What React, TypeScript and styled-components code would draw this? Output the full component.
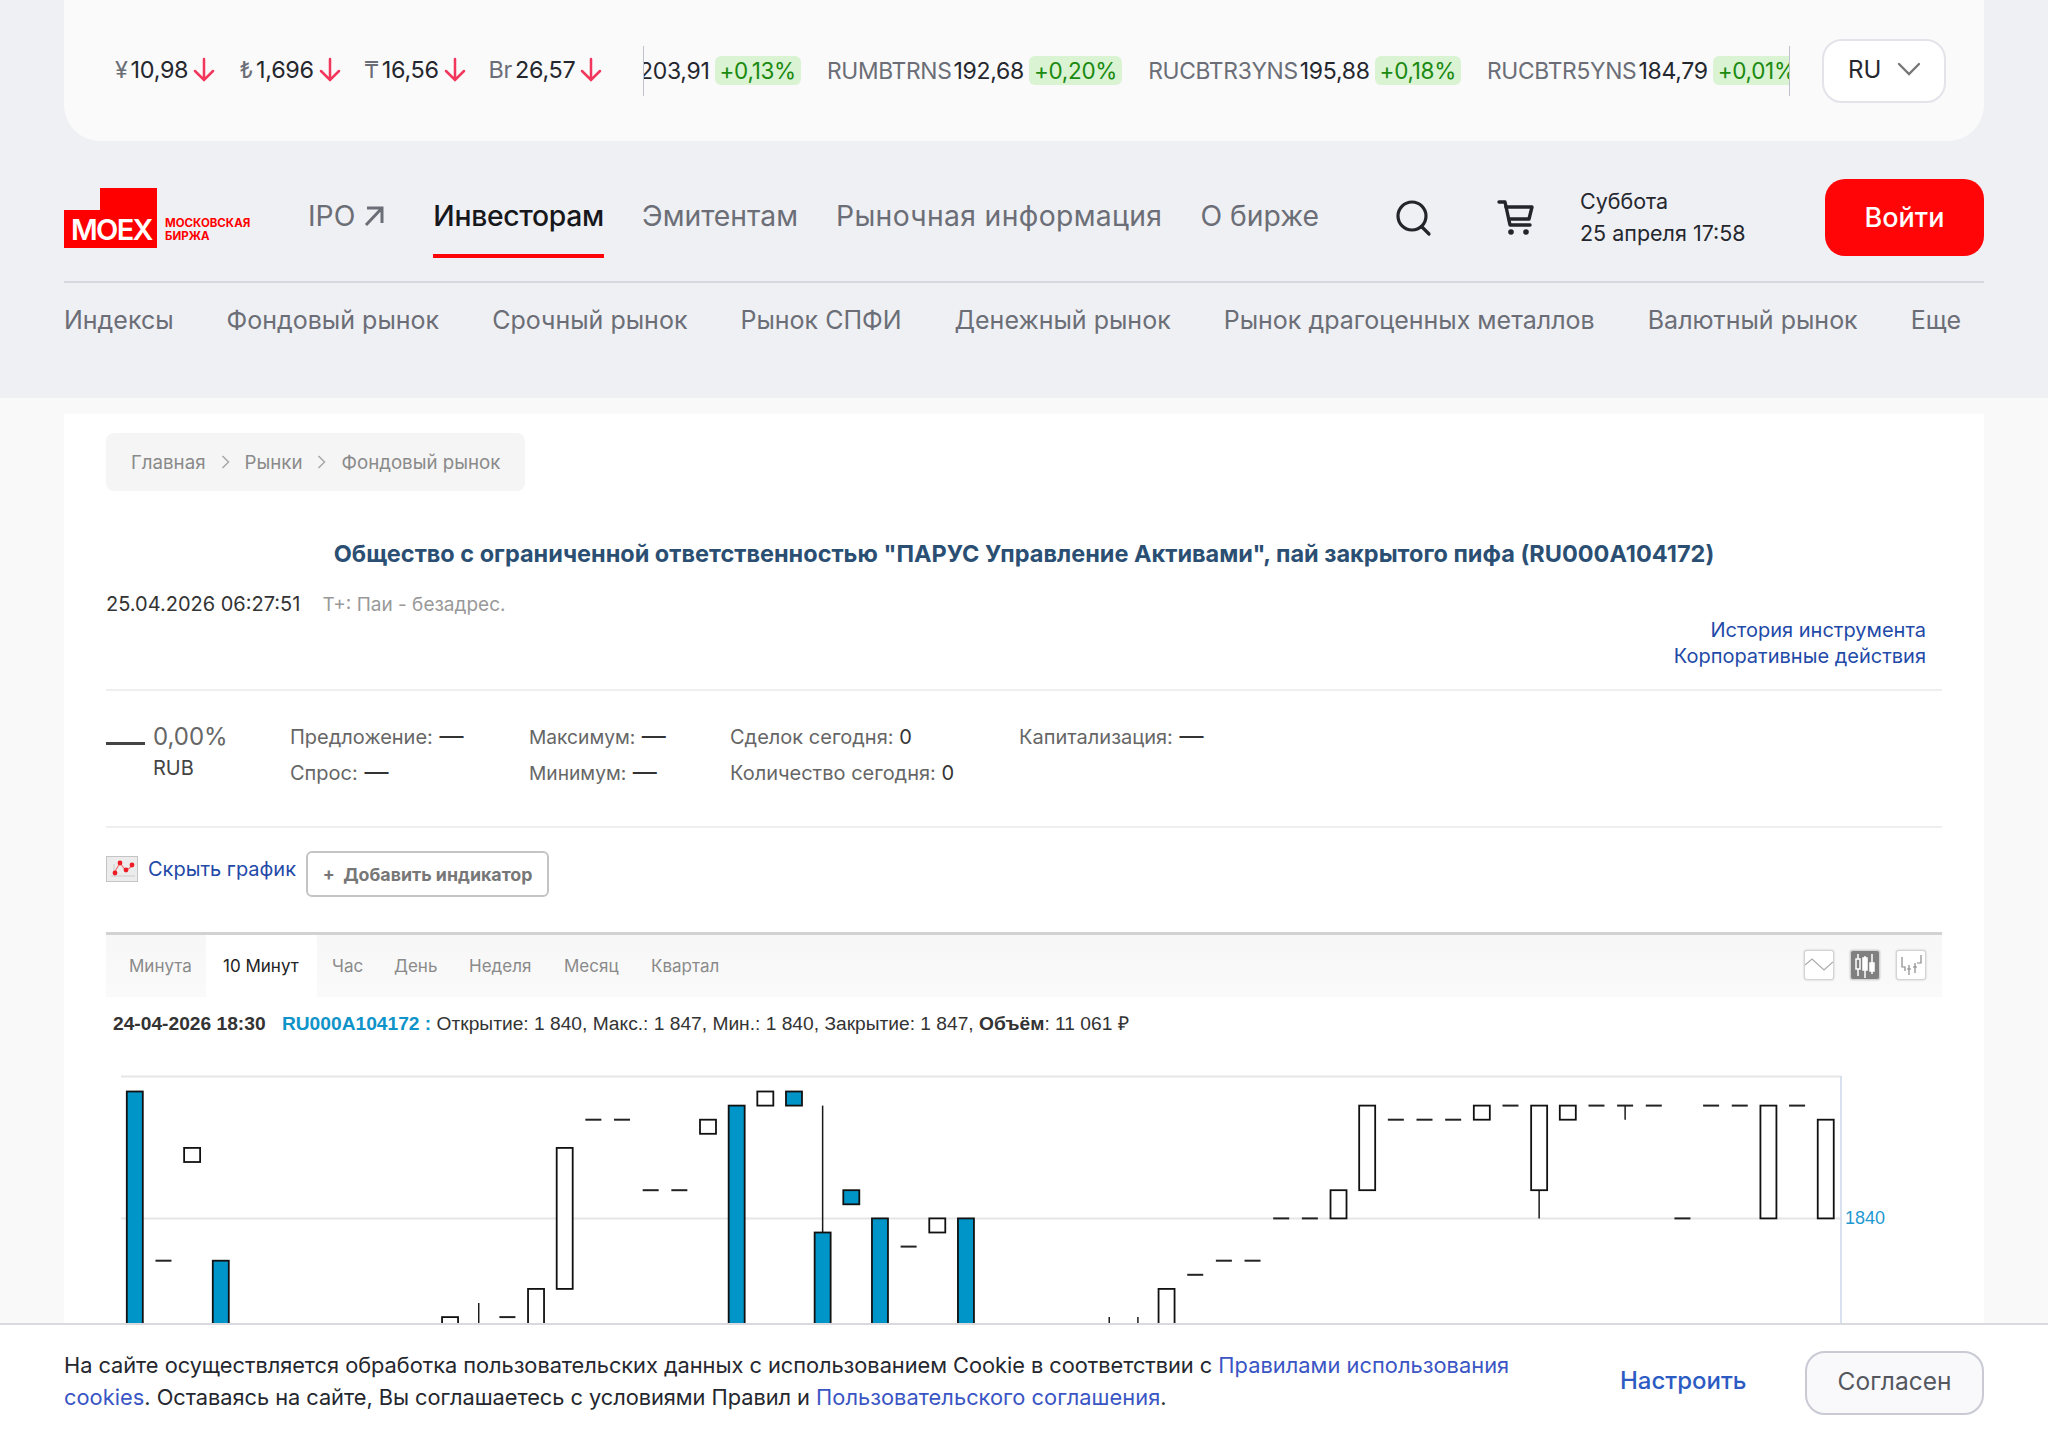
import React from "react";
import styled, { createGlobalStyle } from "styled-components";

const Global = createGlobalStyle`
  html, body { margin: 0; padding: 0; background: #f9f9f9; overflow: hidden; }
  body { font-family: Inter, "Noto Sans", sans-serif; }
  * { box-sizing: border-box; }
  a { text-decoration: none; color: inherit; }
`;

const Page = styled.div`
  width: 2048px;
  height: 1440px;
  overflow: hidden;
  background: #f9f9f9;
`;
const Header = styled.header`
  height: 398px;
  background: #eff0f4;
  padding: 0 64px;
`;
const TopBar = styled.div`
  height: 141px;
  background: #fafafa;
  border-radius: 0 0 36px 36px;
  display: flex;
  align-items: center;
  padding-left: 51px;
`;
const Currencies = styled.div`
  display: flex;
  width: 528px;
  flex: none;
`;
const Currency = styled.div`
  display: flex;
  align-items: center;
  width: 124.5px;
  flex: none;
  font-size: 23.4px;
  letter-spacing: -0.3px;
  color: #25272e;
  margin-top: -2px;
`;
const CurSym = styled.span`
  color: #6b6e76;
  margin-right: 3px;
`;
const Ticker = styled.div`
  width: 1147px;
  height: 50px;
  flex: none;
  overflow: hidden;
  border-left: 1.5px solid #bfc2cc;
  border-right: 1.5px solid #bfc2cc;
  display: flex;
  align-items: center;
  white-space: nowrap;
  font-size: 23px;
  letter-spacing: -0.3px;
`;
const TickItem = styled.div<{ $offset?: number }>`
  display: flex;
  align-items: center;
  flex: none;
  margin-left: ${(p) => p.$offset ?? 26}px;
`;
const TickName = styled.span`
  color: #6b6e76;
  font-size: 22.8px;
  margin-right: 2px;
`;
const TickValue = styled.span`
  color: #25272e;
`;
const TickBadge = styled.span`
  background: #daf3d3;
  color: #1b8a10;
  font-size: 22.5px;
  border-radius: 6px;
  height: 29px;
  line-height: 29px;
  padding: 0 5px;
  margin-left: 5px;
`;
const LangButton = styled.div`
  width: 124px;
  height: 64px;
  margin-left: 32px;
  flex: none;
  background: #fff;
  border: 2px solid #e3e4ea;
  border-radius: 20px;
  display: flex;
  align-items: center;
  padding: 0 0 3px 24px;
  gap: 16px;
  font-size: 24px;
  color: #25272e;
`;
const NavRow = styled.div`
  height: 142px;
  padding-top: 14px;
  display: flex;
  align-items: center;
  border-bottom: 2px solid #d5d6df;
`;
const LogoWrap = styled.div`
  width: 244px;
  flex: none;
  display: flex;
`;
const NavList = styled.nav`
  display: flex;
  align-items: center;
  height: 100%;
`;
const NavItem = styled.a<{ $active?: boolean; $gap?: number; $ls?: number }>`
  display: flex;
  align-items: center;
  gap: 8px;
  height: 79px;
  margin-right: ${(p) => p.$gap ?? 38}px;
  font-size: 28.3px;
  color: ${(p) => (p.$active ? "#17181c" : "#6b6e76")};
  font-weight: ${(p) => (p.$active ? 500 : 400)};
  letter-spacing: ${(p) => (p.$active ? -0.3 : p.$ls ?? 0)}px;
  border-bottom: 4px solid ${(p) => (p.$active ? "#ff0508" : "transparent")};
  white-space: nowrap;
`;
const NavIcon = styled.svg`
  flex: none;
  color: #23252b;
`;
const SearchSlot = styled.div`
  margin-left: 38px;
  width: 102px;
  flex: none;
  display: flex;
`;
const CartSlot = styled.div`
  width: 83px;
  flex: none;
  display: flex;
`;
const DateBox = styled.div`
  flex: 1;
  font-size: 21.5px;
  line-height: 32px;
  color: #25272e;
  margin-top: -2px;
`;
const LoginButton = styled.a`
  width: 159px;
  height: 77px;
  margin-top: -2px;
  border-radius: 20px;
  background: #ff0508;
  color: #fff;
  font-size: 27px;
  font-weight: 500;
  display: flex;
  align-items: center;
  justify-content: center;
`;
const SubNav = styled.nav`
  display: flex;
  gap: 53px;
  padding-top: 22px;
  font-size: 25px;
  color: #6b6e76;
  white-space: nowrap;
`;

const Main = styled.main`
  width: 1920px;
  height: 1026px;
  margin: 16px auto 0;
  background: #fff;
  padding: 19px 42px 0;
`;
const Breadcrumbs = styled.div`
  display: inline-flex;
  align-items: center;
  height: 58px;
  padding: 0 25px;
  gap: 15px;
  background: #f5f5f5;
  border-radius: 8px;
  font-size: 18.7px;
  color: #8a8a8a;
`;
const Title = styled.h1`
  margin: 45px 0 0;
  font-size: 23.5px;
  line-height: 36px;
  font-weight: 700;
  text-align: center;
  color: #2b4f73;
`;
const MetaRow = styled.div`
  display: flex;
  align-items: baseline;
  gap: 22px;
  margin-top: 17px;
  font-size: 20px;
  line-height: 30px;
  color: #333;
`;
const MetaNote = styled.span`
  font-size: 19px;
  color: #999;
`;
const SideLinks = styled.div`
  height: 72px;
  padding: 0 16px 0 0;
  text-align: right;
  font-size: 20px;
  line-height: 26px;
  color: #1f4aa8;
  margin-top: -3px;
`;
const Divider = styled.div`
  height: 2px;
  background: #efefef;
`;
const Stats = styled.div`
  display: flex;
  height: 135px;
  padding-top: 28px;
`;
const PriceBlock = styled.div`
  width: 184px;
  flex: none;
  display: flex;
  gap: 8px;
`;
const PriceDash = styled.div`
  width: 39px;
  height: 3px;
  background: #444;
  margin-top: 23px;
`;
const PriceText = styled.div`
  font-size: 24px;
  line-height: 36px;
  color: #666;
`;
const PriceCur = styled.div`
  font-size: 20px;
  line-height: 26px;
  color: #444;
`;
const StatColumn = styled.div<{ $w: number; $fs?: number }>`
  width: ${(p) => p.$w}px;
  flex: none;
  font-size: ${(p) => p.$fs ?? 20}px;
  line-height: 36px;
  color: #666;
`;
const StatValue = styled.span`
  color: #333;
`;
const StatDash = styled.span`
  color: #333;
  font-size: 24px;
  line-height: 1;
  margin-left: 1px;
`;
const ChartControls = styled.div`
  display: flex;
  align-items: flex-start;
  height: 104px;
  padding-top: 23px;
`;
const HideLink = styled.a`
  display: flex;
  align-items: center;
  gap: 10px;
  font-size: 20px;
  color: #1f4aa8;
  height: 32px;
  margin-top: 2px;
`;
const AddButton = styled.button`
  margin-left: 10px;
  width: 243px;
  height: 46px;
  background: #fff;
  border: 2px solid #c4c4c4;
  border-radius: 6px;
  font-family: Inter, sans-serif;
  font-size: 17.8px;
  font-weight: 700;
  color: #777;
  padding: 0;
`;
const ChartToolbar = styled.div`
  display: flex;
  height: 65px;
  border-top: 3px solid #d2d2d2;
  background: linear-gradient(#f7f7f7, #fafafa);
  align-items: stretch;
`;
const Tab = styled.div<{ $active?: boolean; $w: number; $pl: number }>`
  width: ${(p) => p.$w}px;
  padding-left: ${(p) => p.$pl}px;
  flex: none;
  display: flex;
  align-items: center;
  font-size: 17px;
  white-space: nowrap;
  background: ${(p) => (p.$active ? "#fff" : "transparent")};
  color: ${(p) => (p.$active ? "#222" : "#8a8a8a")};
`;
const ChartTypes = styled.div`
  margin-left: auto;
  display: flex;
  align-items: center;
  gap: 16px;
  padding-right: 16px;
  padding-bottom: 2px;
`;
const TypeButton = styled.div<{ $active?: boolean }>`
  width: 30px;
  height: 30px;
  border-radius: 3px;
  border: 1px solid #d4d4d4;
  box-shadow: 0 0 2px rgba(0, 0, 0, 0.25);
  background: ${(p) => (p.$active ? "#808080" : "#fff")};
  display: flex;
`;
const InfoLine = styled.div`
  padding-left: 7px;
  margin-top: 15px;
  font-family: "Liberation Sans", Arial, sans-serif;
  font-size: 19.2px;
  line-height: 24px;
  color: #333;
`;
const InfoDate = styled.b`
  margin-right: 11px;
`;
const InfoCode = styled.b`
  color: #0f94c9;
`;
const ChartSvg = styled.svg`
  display: block;
  margin-top: 24px;
`;

const CookieBar = styled.div`
  position: fixed;
  left: 0;
  right: 0;
  bottom: 0;
  height: 117px;
  background: #fff;
  border-top: 2px solid #d9d9de;
  display: flex;
  align-items: center;
  padding: 0 64px;
`;
const CookieText = styled.p`
  margin: -4px 0 0;
  width: 1480px;
  flex: none;
  font-size: 21.8px;
  line-height: 32px;
  letter-spacing: -0.04px;
  color: #25272e;
`;
const CookieLink = styled.a`
  color: #3a55c4;
  letter-spacing: 0.04px;
`;
const Setup = styled.a`
  margin: -4px 0 0 76px;
  font-size: 24px;
  font-weight: 500;
  color: #2c5bc4;
  white-space: nowrap;
`;
const AgreeButton = styled.button`
  margin-left: auto;
  width: 179px;
  height: 64px;
  border: 2px solid #c9cad4;
  border-radius: 20px;
  background: #f9f9fb;
  font-family: Inter, sans-serif;
  font-size: 24.5px;
  color: #55575f;
  padding: 0 0 3px;
`;

const DownArrow = () => (
  <svg width="22" height="26" viewBox="0 0 22 26" fill="none" stroke="#f2365c" strokeWidth="2.5" strokeLinecap="round" style={{ marginLeft: 5, flex: "none" }}>
    <path d="M11 2v21M2 14l9 9 9-9" />
  </svg>
);

const MoexLogo = () => (
  <svg width="187" height="60" viewBox="0 0 187 60" style={{ flex: "none" }}>
    <path d="M36 0h57v60H0V22h36z" fill="#ff0000" />
    <text x="7" y="51.5" fontFamily="Inter, sans-serif" fontSize="29" fontWeight="600" letterSpacing="-1.7" fill="#fff">MOEX</text>
    <text x="101" y="39" fontFamily="Inter, sans-serif" fontSize="11.5" fontWeight="700" fill="#ff0000">МОСКОВСКАЯ</text>
    <text x="101" y="52" fontFamily="Inter, sans-serif" fontSize="11.5" fontWeight="700" fill="#ff0000">БИРЖА</text>
  </svg>
);

type Candle = [number, "f" | "h" | "d", number, number?, number?, number?];
const L = (n: number) => 1091.5 + 14.1 * n;
const BOT = 1450;
const candles: Candle[] = [
  [0, "f", 0, 99],
  [1, "d", 12],
  [2, "h", 4, 5],
  [3, "f", 12, 99],
  [11, "h", 16, 99],
  [12, "d", -1, undefined, 15, 99],
  [13, "d", 16],
  [14, "h", 14, 99],
  [15, "h", 4, 14],
  [16, "d", 2],
  [17, "d", 2],
  [18, "d", 7],
  [19, "d", 7],
  [20, "h", 2, 3],
  [21, "f", 1, 99],
  [22, "h", 0, 1],
  [23, "f", 0, 1],
  [24, "f", 10, 99, 1, 10],
  [25, "f", 7, 8],
  [26, "f", 9, 99],
  [27, "d", 11],
  [28, "h", 9, 10],
  [29, "f", 9, 99],
  [34, "d", -1, undefined, 16, 99],
  [35, "d", -1, undefined, 16, 99],
  [36, "h", 14, 99],
  [37, "d", 13],
  [38, "d", 12],
  [39, "d", 12],
  [40, "d", 9],
  [41, "d", 9],
  [42, "h", 7, 9],
  [43, "h", 1, 7],
  [44, "d", 2],
  [45, "d", 2],
  [46, "d", 2],
  [47, "h", 1, 2],
  [48, "d", 1],
  [49, "h", 1, 7, 7, 9],
  [50, "h", 1, 2],
  [51, "d", 1],
  [52, "d", 1, undefined, 1, 2],
  [53, "d", 1],
  [54, "d", 9],
  [55, "d", 1],
  [56, "d", 1],
  [57, "h", 1, 9],
  [58, "d", 1],
  [59, "h", 2, 9],
];

const lv = (n: number) => (n >= 99 ? BOT : L(n));

const Chart = () => (
  <ChartSvg width="1820" height="400" viewBox="106 1060 1820 400">
    <line x1="121" y1="1076.5" x2="1841" y2="1076.5" stroke="#e6e6e6" strokeWidth="2" />
    <line x1="121" y1="1218.5" x2="1841" y2="1218.5" stroke="#e6e6e6" strokeWidth="2" />
    <line x1="1841" y1="1076" x2="1841" y2="1460" stroke="#ccd6eb" strokeWidth="1.5" />
    {candles.map(([i, kind, a, b, wa, wb]) => {
      const cx = 134.8 + 28.66 * i;
      return (
        <g key={i}>
          {wa !== undefined && wb !== undefined && (
            <line x1={cx} x2={cx} y1={lv(wa)} y2={lv(wb)} stroke="#1a1a1a" strokeWidth="1.5" />
          )}
          {kind === "d" && a >= 0 && (
            <line x1={cx - 8} x2={cx + 8} y1={lv(a)} y2={lv(a)} stroke="#222" strokeWidth="2" />
          )}
          {kind !== "d" && (
            <rect
              x={cx - 8}
              y={lv(a)}
              width="16"
              height={lv(b as number) - lv(a)}
              fill={kind === "f" ? "#0095c8" : "#fff"}
              stroke="#111"
              strokeWidth="1.8"
            />
          )}
        </g>
      );
    })}
    <text x="1845" y="1224" fontFamily="Liberation Sans, Arial, sans-serif" fontSize="18" fill="#1f9ad1">
      1840
    </text>
  </ChartSvg>
);

const Sep = () => (
  <svg width="9" height="16" viewBox="0 0 9 16" fill="none" stroke="#a8a8a8" strokeWidth="1.5">
    <path d="M1.5 2l6 6-6 6" />
  </svg>
);

const ticks = [
  { value: "203,91", change: "+0,13%", offset: -5 },
  { name: "RUMBTRNS", value: "192,68", change: "+0,20%" },
  { name: "RUCBTR3YNS", value: "195,88", change: "+0,18%" },
  { name: "RUCBTR5YNS", value: "184,79", change: "+0,01%" },
];

export default function App() {
  return (
    <Page>
      <Global />
      <Header>
        <TopBar>
          <Currencies>
            {[
              ["¥", "10,98"],
              ["₺", "1,696"],
              ["₸", "16,56"],
              ["Br", "26,57"],
            ].map(([s, v]) => (
              <Currency key={s}>
                <CurSym>{s}</CurSym>
                {v}
                <DownArrow />
              </Currency>
            ))}
          </Currencies>
          <Ticker>
            {ticks.map((t, i) => (
              <TickItem key={i} $offset={t.offset}>
                {t.name && <TickName>{t.name}</TickName>}
                <TickValue>{t.value}</TickValue>
                <TickBadge>{t.change}</TickBadge>
              </TickItem>
            ))}
          </Ticker>
          <LangButton>
            RU
            <svg width="24" height="14" viewBox="0 0 24 14" fill="none" stroke="#777" strokeWidth="2.4" strokeLinecap="round">
              <path d="M2 2l10 10L22 2" />
            </svg>
          </LangButton>
        </TopBar>
        <NavRow>
          <LogoWrap>
            <MoexLogo />
          </LogoWrap>
          <NavList>
            <NavItem $gap={48}>
              IPO
              <svg width="22" height="22" viewBox="0 0 22 22" fill="none" stroke="#6b6e76" strokeWidth="3">
                <path d="M4 3h15v15M19 3L3 20" />
              </svg>
            </NavItem>
            <NavItem $active>Инвесторам</NavItem>
            <NavItem>Эмитентам</NavItem>
            <NavItem $ls={0.35}>Рыночная информация</NavItem>
            <NavItem>О бирже</NavItem>
          </NavList>
          <SearchSlot>
            <NavIcon width="38" height="38" viewBox="0 0 38 38" fill="none" stroke="currentColor" strokeWidth="3.2" strokeLinecap="round">
              <circle cx="17" cy="17" r="14" />
              <path d="M27 28l7 7" />
            </NavIcon>
          </SearchSlot>
          <CartSlot>
            <NavIcon width="38" height="36" viewBox="0 0 38 36" fill="none" stroke="currentColor" strokeWidth="3.4" strokeLinecap="round" strokeLinejoin="round">
              <path d="M2 2h6l5 23h20" />
              <path d="M9 7h26l-3 12H12" />
              <circle cx="14" cy="32" r="2.8" fill="currentColor" stroke="none" />
              <circle cx="29" cy="32" r="2.8" fill="currentColor" stroke="none" />
            </NavIcon>
          </CartSlot>
          <DateBox>
            Суббота
            <br />
            25 апреля 17:58
          </DateBox>
          <LoginButton>Войти</LoginButton>
        </NavRow>
        <SubNav>
          <a>Индексы</a>
          <a>Фондовый рынок</a>
          <a>Срочный рынок</a>
          <a>Рынок СПФИ</a>
          <a>Денежный рынок</a>
          <a>Рынок драгоценных металлов</a>
          <a>Валютный рынок</a>
          <a>Еще</a>
        </SubNav>
      </Header>
      <Main>
        <Breadcrumbs>
          Главная <Sep /> Рынки <Sep /> Фондовый рынок
        </Breadcrumbs>
        <Title>Общество с ограниченной ответственностью "ПАРУС Управление Активами", пай закрытого пифа (RU000A104172)</Title>
        <MetaRow>
          25.04.2026 06:27:51
          <MetaNote>Т+: Паи - безадрес.</MetaNote>
        </MetaRow>
        <SideLinks>
          История инструмента
          <br />
          Корпоративные действия
        </SideLinks>
        <Divider />
        <Stats>
          <PriceBlock>
            <PriceDash />
            <div>
              <PriceText>0,00%</PriceText>
              <PriceCur>RUB</PriceCur>
            </div>
          </PriceBlock>
          <StatColumn $w={239}>
            Предложение: <StatDash>—</StatDash>
            <br />
            Спрос: <StatDash>—</StatDash>
          </StatColumn>
          <StatColumn $w={201} $fs={19.2}>
            Максимум: <StatDash>—</StatDash>
            <br />
            Минимум: <StatDash>—</StatDash>
          </StatColumn>
          <StatColumn $w={289}>
            Сделок сегодня: <StatValue>0</StatValue>
            <br />
            Количество сегодня: <StatValue>0</StatValue>
          </StatColumn>
          <StatColumn $w={300}>Капитализация: <StatDash>—</StatDash></StatColumn>
        </Stats>
        <Divider />
        <ChartControls>
          <HideLink>
            <svg width="32" height="26" viewBox="0 0 32 26">
              <rect x="0.5" y="0.5" width="31" height="25" fill="#ececec" stroke="#c4c4c4" />
              <path d="M8 8v13M5 20h24" stroke="#d6d6d6" strokeWidth="1.5" fill="none" />
              <path d="M8 17L14 7l6 8 7-6" stroke="#f07070" strokeWidth="1.2" fill="none" />
              <circle cx="9" cy="17" r="2.4" fill="#ee1c25" />
              <circle cx="14" cy="7" r="2.4" fill="#ee1c25" />
              <circle cx="20" cy="14" r="2.4" fill="#ee1c25" />
              <circle cx="26" cy="9" r="2.4" fill="#ee1c25" />
            </svg>
            Скрыть график
          </HideLink>
          <AddButton>+&nbsp; Добавить индикатор</AddButton>
        </ChartControls>
        <ChartToolbar>
          <Tab $w={100} $pl={23}>Минута</Tab>
          <Tab $w={111} $pl={17} $active>10 Минут</Tab>
          <Tab $w={62} $pl={15}>Час</Tab>
          <Tab $w={75} $pl={15}>День</Tab>
          <Tab $w={95} $pl={15}>Неделя</Tab>
          <Tab $w={87} $pl={15}>Месяц</Tab>
          <Tab $w={92} $pl={15}>Квартал</Tab>
          <ChartTypes>
            <TypeButton>
              <svg width="28" height="28" viewBox="0 0 28 28" fill="none" stroke="#aaa" strokeWidth="1.2">
                <path d="M0 14l7-6 12 11 9-8" />
              </svg>
            </TypeButton>
            <TypeButton $active>
              <svg width="28" height="28" viewBox="0 0 28 28" fill="#fff" stroke="#fff" strokeWidth="1.5">
                <path d="M7 3v22M14 5v22M21 3v20" />
                <rect x="5" y="8" width="4" height="10" fill="#808080" />
                <rect x="12" y="7" width="4" height="12" />
                <rect x="19" y="12" width="4" height="8" />
              </svg>
            </TypeButton>
            <TypeButton>
              <svg width="28" height="28" viewBox="0 0 28 28" fill="none" stroke="#888" strokeWidth="1.2">
                <path d="M5 6v10h3v4M12 14v10M10 18h4M18 12v10M16 16h4M24 4v8h-4" />
              </svg>
            </TypeButton>
          </ChartTypes>
        </ChartToolbar>
        <InfoLine>
          <InfoDate>24-04-2026 18:30</InfoDate> <InfoCode>RU000A104172 :</InfoCode> Открытие: 1 840, Макс.: 1 847, Мин.: 1 840, Закрытие: 1 847, <b>Объём</b>: 11 061 ₽
        </InfoLine>
        <Chart />
      </Main>
      <CookieBar>
        <CookieText>
          На сайте осуществляется обработка пользовательских данных с использованием Cookie в соответствии с <CookieLink>Правилами использования cookies</CookieLink>. Оставаясь на сайте, Вы соглашаетесь с условиями Правил и <CookieLink>Пользовательского соглашения</CookieLink>.
        </CookieText>
        <Setup>Настроить</Setup>
        <AgreeButton>Согласен</AgreeButton>
      </CookieBar>
    </Page>
  );
}
